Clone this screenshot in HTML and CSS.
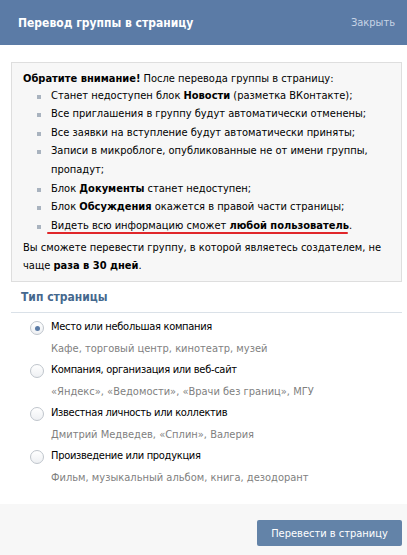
FILE: index.html
```html
<!DOCTYPE html>
<html lang="ru">
<head>
<meta charset="utf-8">
<title>Перевод группы в страницу</title>
<link rel="stylesheet" href="styles.css">
</head>
<body>
<div class="dialog">
  <div class="header">
    <div class="title">Перевод группы в страницу</div>
    <div class="close">Закрыть</div>
  </div>
  <div class="content">
    <div class="notice">
      <div class="lead"><b>Обратите внимание!</b> После перевода группы в страницу:</div>
      <ul class="list">
        <li>Станет недоступен блок <b>Новости</b> (разметка ВКонтакте);</li>
        <li>Все приглашения в группу будут автоматически отменены;</li>
        <li>Все заявки на вступление будут автоматически приняты;</li>
        <li>Записи в микроблоге, опубликованные не от имени группы, пропадут;</li>
        <li>Блок <b>Документы</b> станет недоступен;</li>
        <li>Блок <b>Обсуждения</b> окажется в правой части страницы;</li>
        <li><span class="marked">Видеть всю информацию сможет <b>любой пользователь</b>.</span></li>
      </ul>
      <div class="note">Вы сможете перевести группу, в которой являетесь создателем, не чаще <b>раза в 30 дней</b>.</div>
    </div>
    <div class="section-title">Тип страницы</div>
    <div class="options">
      <div class="option">
        <span class="radio on"></span>
        <div class="opt-text">
          <div class="opt-label">Место или небольшая компания</div>
          <div class="opt-desc">Кафе, торговый центр, кинотеатр, музей</div>
        </div>
      </div>
      <div class="option">
        <span class="radio"></span>
        <div class="opt-text">
          <div class="opt-label">Компания, организация или веб-сайт</div>
          <div class="opt-desc">«Яндекс», «Ведомости», «Врачи без границ», МГУ</div>
        </div>
      </div>
      <div class="option">
        <span class="radio"></span>
        <div class="opt-text">
          <div class="opt-label">Известная личность или коллектив</div>
          <div class="opt-desc">Дмитрий Медведев, «Сплин», Валерия</div>
        </div>
      </div>
      <div class="option">
        <span class="radio"></span>
        <div class="opt-text">
          <div class="opt-label">Произведение или продукция</div>
          <div class="opt-desc">Фильм, музыкальный альбом, книга, дезодорант</div>
        </div>
      </div>
    </div>
  </div>
  <div class="footer">
    <button class="btn">Перевести в страницу</button>
  </div>
</div>
</body>
</html>
```

FILE: styles.css
```css
html, body {
  margin: 0;
  padding: 0;
  background: #ffffff;
}
body {
  font-family: "DejaVu Sans Condensed", "DejaVu Sans", Tahoma, sans-serif;
  font-stretch: condensed;
  font-size: 11px;
  color: #000000;
}
.dialog {
  width: 407px;
  height: 555px;
  display: flex;
  flex-direction: column;
  overflow: hidden;
}
.header {
  flex: none;
  height: 45px;
  background: #5b7ba6;
  display: flex;
  align-items: center;
  justify-content: space-between;
  padding: 0 12px 0 18px;
}
.title {
  color: #ffffff;
  font-weight: bold;
  font-size: 12px;
}
.close {
  color: #c7d4e5;
  font-size: 11px;
}
.content {
  flex: 1;
  padding: 17px 5px 0 11px;
}
.notice {
  background: #f7f7f7;
  border: 1px solid #dedede;
  padding: 7px 10px 6px 11px;
  line-height: 18.6px;
}
.list {
  list-style: none;
  margin: -2px 0 0 0;
  padding: 0 0 0 28px;
}
.list li {
  position: relative;
}
.list li::before {
  content: "";
  position: absolute;
  left: -14px;
  top: 8px;
  width: 4px;
  height: 4px;
  background: #a9b3bf;
}
.marked {
  position: relative;
}
.marked::after {
  content: "";
  position: absolute;
  left: -4px;
  right: 4px;
  bottom: -2px;
  height: 2px;
  background: #e0262a;
  border-radius: 2px;
}
.note {
  margin-top: 4px;
  line-height: 18px;
}
.section-title {
  color: #45688e;
  font-weight: bold;
  font-size: 12px;
  padding: 8px 0 8px 10px;
  border-bottom: 1px solid #dae1e8;
}
.options {
  padding: 6px 0 0 19px;
  display: flex;
  flex-direction: column;
  gap: 5px;
}
.option {
  display: flex;
  align-items: flex-start;
  gap: 7px;
}
.radio {
  width: 12px;
  height: 12px;
  border: 1px solid #bfc5cc;
  border-radius: 50%;
  background: linear-gradient(#ffffff, #eef0f3);
  margin-top: 2px;
  flex: none;
  display: flex;
  align-items: center;
  justify-content: center;
  box-sizing: content-box;
}
.radio.on::after {
  content: "";
  width: 5px;
  height: 5px;
  border-radius: 50%;
  background: #5b7ba6;
}
.opt-label {
  line-height: 16px;
  letter-spacing: -0.3px;
}
.opt-desc {
  color: #7f7f7f;
  line-height: 16px;
  margin-top: 6px;
}
.footer {
  flex: none;
  height: 51px;
  background: #f7f7f7;
  display: flex;
  align-items: flex-start;
  justify-content: flex-end;
  padding: 16px 5px 0 0;
  box-sizing: border-box;
}
.btn {
  width: 145px;
  height: 26px;
  background: #6383a8;
  border: none;
  border-radius: 2px;
  color: #ffffff;
  font-family: "DejaVu Sans Condensed", "DejaVu Sans", Tahoma, sans-serif;
  font-stretch: condensed;
  font-size: 11px;
  padding: 0;
}
```
